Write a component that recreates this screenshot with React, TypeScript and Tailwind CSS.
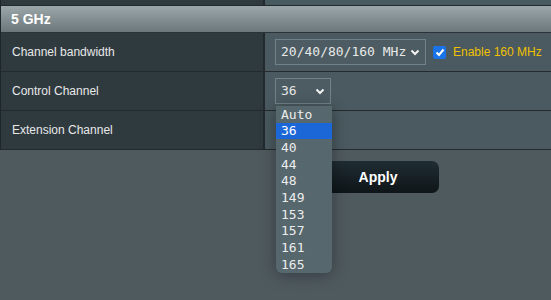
import React from "react";

const channels = ["Auto", "36", "40", "44", "48", "149", "153", "157", "161", "165"];

const Chevron: React.FC = () => (
  <svg width="10" height="7" viewBox="0 0 10 7" className="shrink-0">
    <polyline points="1.5,1.5 5,5 8.5,1.5" fill="none" stroke="#f2f2f2" strokeWidth="2" />
  </svg>
);

const Row: React.FC<{ label: string; children?: React.ReactNode }> = ({ label, children }) => (
  <div className="grid grid-cols-[264px_1fr] h-[39px] border-b border-[#232b2f]">
    <div className="flex items-center pl-[11px] bg-[#2f3a3f] border-r-2 border-[#222a2e] text-[12px] text-[#e8e8e8]">
      {label}
    </div>
    <div className="flex items-center pl-[10px] bg-[#4a5a60]">{children}</div>
  </div>
);

export default function App() {
  return (
    <div className="relative h-[300px] w-[551px] overflow-hidden bg-[#4f5a5f] font-['Liberation_Sans',Arial,sans-serif]">
      {/* Table */}
      <div className="border-l border-[#1e2629]">
        {/* previous row remnant */}
        <div className="grid grid-cols-[264px_1fr] h-[6px] border-b border-[#222a2e]">
          <div className="bg-[#2f3a3f] border-r-2 border-[#222a2e]" />
          <div className="bg-[#475a60]" />
        </div>

        {/* Header */}
        <div className="flex items-center h-[27px] pl-[10px] border-b border-[#2a3337] bg-gradient-to-b from-[#9ca7aa] to-[#6b777b] text-[14px] font-bold text-white">
          5 GHz
        </div>

        <Row label="Channel bandwidth">
          <div className="flex items-center justify-between w-[151px] h-[26px] pl-[5px] pr-[5px] border border-[#72828a] bg-[#4c5c62] font-['DejaVu_Sans_Mono',monospace] text-[13px] text-[#e8e8e8]">
            <span>20/40/80/160 MHz</span>
            <Chevron />
          </div>
          <div className="ml-[7px] flex h-[13px] w-[13px] items-center justify-center rounded-[2px] bg-[#1a73e8]">
            <svg width="10" height="9" viewBox="0 0 10 9">
              <polyline points="1.5,4.5 4,7 8.5,1.5" fill="none" stroke="white" strokeWidth="2" />
            </svg>
          </div>
          <span className="ml-[7px] text-[12px] text-[#f0c000]">Enable 160 MHz</span>
        </Row>

        <Row label="Control Channel">
          <div className="flex items-center justify-between w-[56px] h-[26px] pl-[5px] pr-[5px] border border-[#72828a] bg-[#4c5c62] font-['DejaVu_Sans_Mono',monospace] text-[13px] text-[#e8e8e8]">
            <span>36</span>
            <Chevron />
          </div>
        </Row>

        <Row label="Extension Channel" />
      </div>

      {/* Apply */}
      <div className="pl-[317px] pt-[11px]">
        <button className="h-[32px] w-[122px] rounded-[7px] bg-gradient-to-b from-[#1f2d33] to-[#0f1518] text-[14px] font-bold text-white">
          Apply
        </button>
      </div>

      {/* Open dropdown list */}
      <div className="absolute left-[276px] top-[106px] w-[56px] rounded-b-[6px] bg-[#56676d] shadow-[0_2px_16px_rgba(0,0,0,0.35)] font-['DejaVu_Sans_Mono',monospace] text-[13px] text-[#ececec]">
        {channels.map((c) => (
          <div
            key={c}
            className={`flex items-center h-[16.7px] pl-[5px] ${c === "36" ? "bg-[#1c67d8] text-white" : ""}`}
          >
            {c}
          </div>
        ))}
      </div>
    </div>
  );
}
